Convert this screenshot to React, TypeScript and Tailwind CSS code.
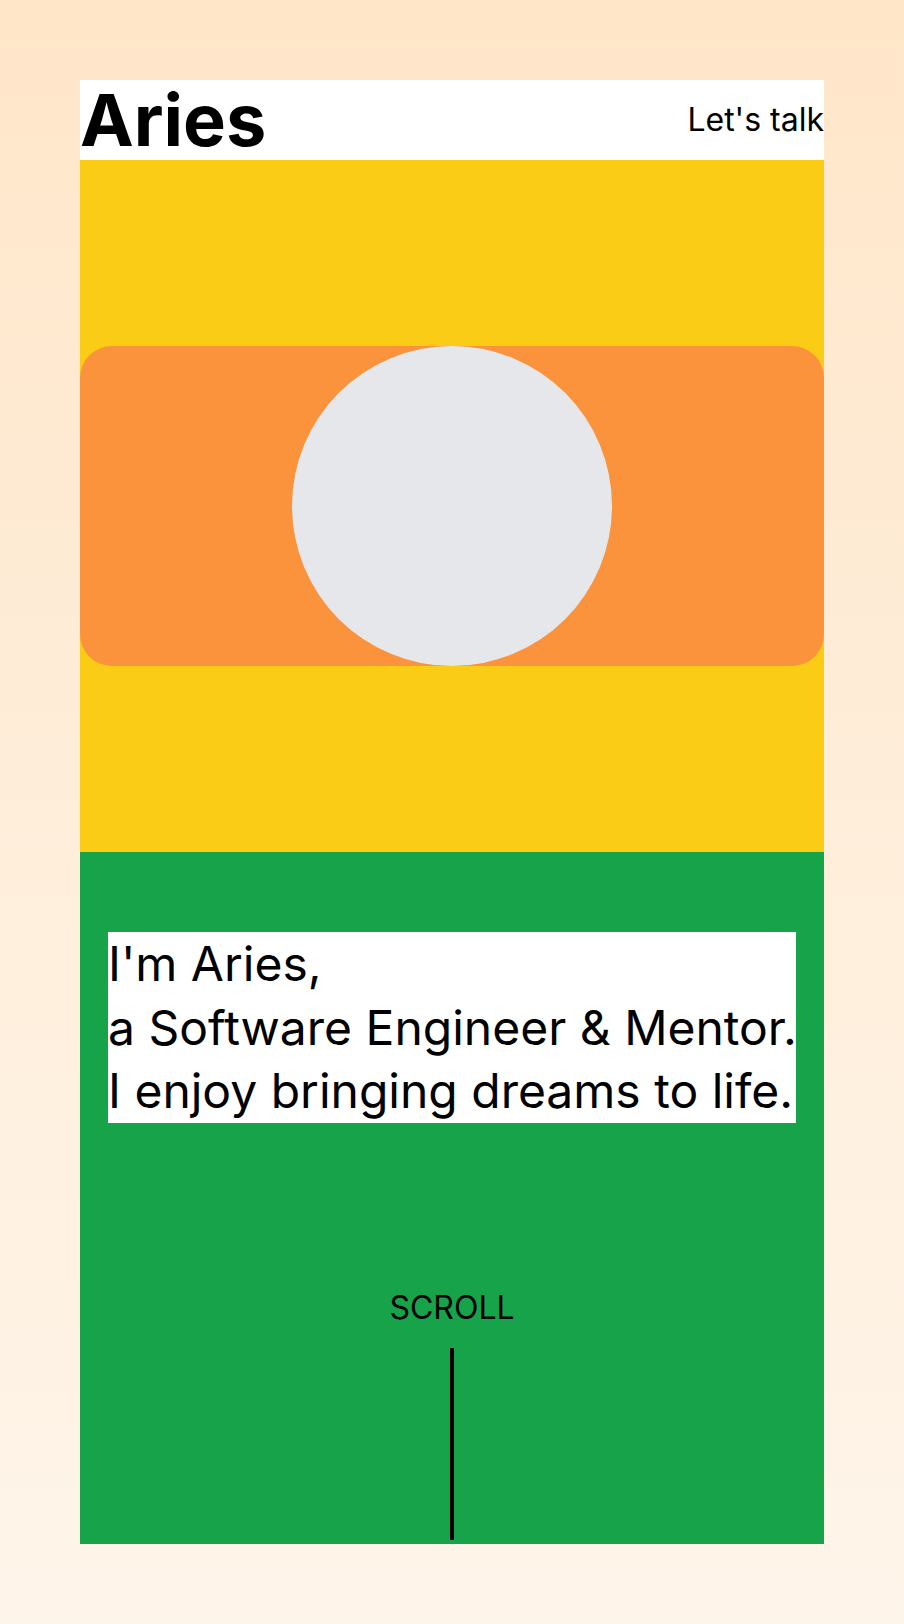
import React from "react";

export default function App() {
  return (
    <div
      className="min-h-[1624px] w-full bg-linear-to-b from-[#ffe6c9] to-[#fef5ea] px-20 pt-20 pb-20"
      style={{ fontFamily: "Inter, 'Noto Sans', sans-serif" }}
    >
      <div className="flex flex-col w-full">
        <header className="flex h-20 items-center justify-between bg-white text-black">
          <h1 className="text-[72px] font-bold leading-none">Aries</h1>
          <a className="text-[32px] leading-9">Let's talk</a>
        </header>

        <section className="flex h-[692px] items-center bg-[#facc15]">
          <div className="flex h-80 w-full items-center justify-center rounded-[32px] bg-[#fb923c]">
            <div className="h-80 w-80 rounded-full bg-[#e5e7eb]" />
          </div>
        </section>

        <section className="flex h-[692px] flex-col items-center bg-[#16a34a] px-7 pt-20 pb-1">
          <div className="w-full whitespace-nowrap bg-white text-black">
            <p className="text-[48px] leading-[63.7px]">I'm Aries,</p>
            <p className="text-[48px] leading-[63.7px]">a Software Engineer &amp; Mentor.</p>
            <p className="text-[48px] leading-[63.7px]">I enjoy bringing dreams to life.</p>
          </div>
          <div className="flex-1" />
          <span className="text-[32px] leading-9 text-black">SCROLL</span>
          <div className="mt-[22px] h-[192px] w-1 bg-black" />
        </section>
      </div>
    </div>
  );
}
